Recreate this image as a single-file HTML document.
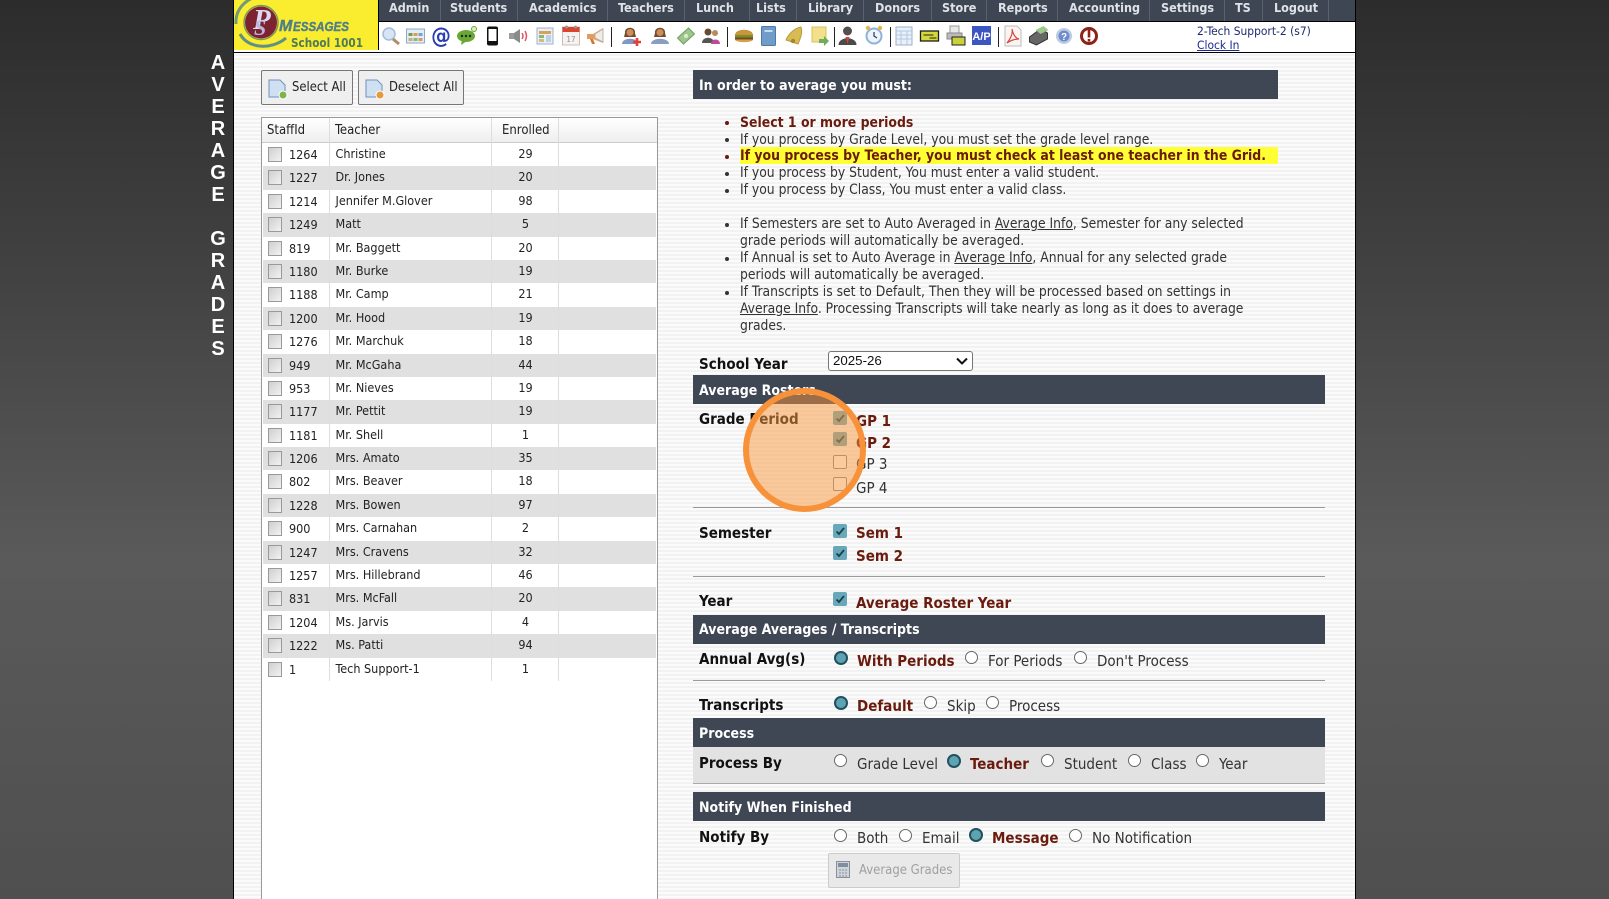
<!DOCTYPE html>
<html><head><meta charset="utf-8"><title>Average Grades</title>
<style>
html,body{margin:0;padding:0;width:1609px;height:899px;overflow:hidden}
body{position:relative;background:linear-gradient(#2c2c2c 0,#444 300px,#5a5a5a 560px,#4f4f4f 899px);font-family:"DejaVu Sans Condensed","DejaVu Sans",sans-serif;font-stretch:condensed;font-size:13px;color:#333}
#wrap{position:absolute;left:0;top:0;width:1609px;height:899px;overflow:hidden}
#page{position:absolute;left:233px;top:0;width:1121px;height:899px;border:solid #000;border-width:0 1px;background:repeating-linear-gradient(#fbfbfb 0 2px,#f2f2f2 2px 4px)}
.a{position:absolute}
.t{position:absolute;white-space:nowrap;line-height:16px}
.b{font-weight:bold}
.m{font-weight:bold;color:#6a1b0e;font-size:15px}
.lb{font-weight:bold;color:#111;font-size:15px}
.g{font-size:15px}
.bar{position:absolute;left:693px;width:632px;height:29px;background:#3f4755}
.bt{position:absolute;left:699px;color:#fff;font-weight:bold;font-size:14px;line-height:16px;white-space:nowrap}
.hr{position:absolute;left:693px;width:632px;height:1px;background:#9a9a9a}
.nav{position:absolute;top:0;color:#dfe3e8;font-weight:bold;font-size:12.5px;line-height:15px;white-space:nowrap}
.ns{position:absolute;top:0;width:1px;height:21px;background:#5a6270}
.ts{position:absolute;width:1px;height:20px;top:27px;background:#222}
.c{position:absolute;left:833px;width:14px;height:14px;border-radius:2px;background:#67a9ba}
.c svg{position:absolute;left:0;top:0}
.cu{position:absolute;left:833px;width:12px;height:12px;border:1px solid #888;border-radius:2px;background:#fff}
.ro,.rs{position:absolute;width:11px;height:11px;border-radius:50%;border:1px solid #666;background:#fff}
.rs{background:#5fa3b2;border:2px solid #1f5160;width:10px;height:10px}
.li{position:absolute;left:740px;white-space:nowrap;line-height:16px;font-size:13.75px;color:#333}
.li.b{font-size:13.88px}
.li u{color:#333}
.bu{position:absolute;left:725px;width:4px;height:4px;border-radius:50%;background:#333}
#tb{position:absolute;left:261px;top:117px;width:395px;height:782px;border:1.5px solid #999;border-bottom:0;background:#fff}
#hd{position:absolute;left:0;top:0;width:100%;height:24px;background:linear-gradient(#fff,#eee);border-bottom:1px solid #ccc}
#hd span{position:absolute;top:5px;line-height:16px;color:#222;font-size:13px;white-space:nowrap}
#rows{position:absolute;left:1px;top:25px;width:393px}
.r{position:relative;height:23.4px;background:#fff}
.r:nth-child(even){background:#e0e0e0}
.r i{position:absolute;left:5px;top:4px;width:12px;height:13px;border:1.5px solid #999;background:linear-gradient(135deg,#cfcfcf,#f2f2f2)}
.r span{position:absolute;font-style:normal;line-height:16px;top:3px;font-size:12.5px;color:#222;white-space:nowrap}
.r .id{left:26px;top:4px}
.r .nm{left:72.5px}
.r .en{left:229px;width:67px;text-align:center}
.vl{position:absolute;top:0;width:1px;height:563px;background:#ddd}
.btn{position:absolute;box-sizing:border-box;border:1px solid #777;border-radius:2px;background:#efefef;color:#222;font-size:12.9px;line-height:16px}
.btn span{position:absolute;white-space:nowrap;top:8.5px}
#ring{position:absolute;left:743px;top:388px;width:111px;height:112px;border:6.5px solid #f7923a;border-radius:50%;background:rgba(248,150,60,.5)}
.side{position:absolute;left:207px;width:22px;text-align:center;color:#fff;font:bold 20px/22px "Liberation Sans",sans-serif}
</style></head><body>
<div id="wrap">
<div class="side" style="top:52px">A</div><div class="side" style="top:74px">V</div><div class="side" style="top:96px">E</div><div class="side" style="top:118px">R</div><div class="side" style="top:140px">A</div><div class="side" style="top:162px">G</div><div class="side" style="top:184px">E</div><div class="side" style="top:228px">G</div><div class="side" style="top:250px">R</div><div class="side" style="top:272px">A</div><div class="side" style="top:294px">D</div><div class="side" style="top:316px">E</div><div class="side" style="top:338px">S</div>

<div id="page"></div>

<!-- top bar -->
<div class="a" style="left:234px;top:0;width:144px;height:50px;background:#faec2e;overflow:hidden">
 <svg width="144" height="50" style="position:absolute;left:0;top:0">
  <path d="M2 24C1 8 14 -5 34 -5" fill="none" stroke="#6f9a7c" stroke-width="3"/>
  <path d="M6 34C14 49 38 50 52 38" fill="none" stroke="#5f8f86" stroke-width="3"/>
  <circle cx="27" cy="22.5" r="17" fill="none" stroke="#7b9a62" stroke-width="1.5"/>
  <circle cx="27" cy="22.5" r="16" fill="#7c2230"/>
  <text x="19" y="29" font-family="Liberation Serif" font-style="italic" font-weight="bold" font-size="29" fill="#dcd8f0">P</text>
  <text x="20" y="35" font-family="Liberation Serif" font-style="italic" font-weight="bold" font-size="22" fill="#b9b6e0">S</text>
  <text x="45" y="31" font-family="Liberation Sans" font-style="italic" font-weight="bold" font-size="16" fill="#4f7f8a" stroke="#4f7f8a" stroke-width=".4">M</text>
  <text x="59" y="31" font-family="Liberation Sans" font-style="italic" font-weight="bold" font-size="12.5" fill="#4f7f8a" stroke="#4f7f8a" stroke-width=".4" textLength="56" lengthAdjust="spacingAndGlyphs">ESSAGES</text>
  <text x="57" y="47" font-family="DejaVu Sans" font-weight="bold" font-size="12" fill="#4f7a5c" textLength="72" lengthAdjust="spacingAndGlyphs">School 1001</text>
 </svg>
</div>
<div class="a" style="left:378px;top:0;width:977px;height:21px;background:#3e4654"></div>
<div class="a" style="left:378px;top:21px;width:977px;height:1px;background:#000"></div>
<div class="a" style="left:378px;top:22px;width:977px;height:30px;background:#fff"></div>
<div class="a" style="left:378px;top:0;width:1px;height:52px;background:#000"></div>
<div class="a" style="left:234px;top:50px;width:1121px;height:2px;background:#fff"></div>
<div class="a" style="left:234px;top:52px;width:1121px;height:1px;background:#000"></div>

<span class="nav" style="left:389px">Admin</span><span class="nav" style="left:450px">Students</span><span class="nav" style="left:529px">Academics</span><span class="nav" style="left:618px">Teachers</span><span class="nav" style="left:696px">Lunch</span><span class="nav" style="left:756px">Lists</span><span class="nav" style="left:808px">Library</span><span class="nav" style="left:875px">Donors</span><span class="nav" style="left:942px">Store</span><span class="nav" style="left:998px">Reports</span><span class="nav" style="left:1069px">Accounting</span><span class="nav" style="left:1161px">Settings</span><span class="nav" style="left:1235px">TS</span><span class="nav" style="left:1274px">Logout</span>
<i class="ns" style="left:440px"></i><i class="ns" style="left:517px"></i><i class="ns" style="left:607px"></i><i class="ns" style="left:684px"></i><i class="ns" style="left:749px"></i><i class="ns" style="left:796px"></i><i class="ns" style="left:863px"></i><i class="ns" style="left:931px"></i><i class="ns" style="left:986px"></i><i class="ns" style="left:1057px"></i><i class="ns" style="left:1149px"></i><i class="ns" style="left:1224px"></i><i class="ns" style="left:1262px"></i><i class="ns" style="left:1328px"></i>
<i class="ts" style="left:611px"></i><i class="ts" style="left:727px"></i><i class="ts" style="left:834px"></i><i class="ts" style="left:890px"></i><i class="ts" style="left:998px"></i>

<svg class="a" style="left:0;top:0" width="1609" height="60">
 <g transform="translate(391,36)"><circle cx="-2" cy="-2" r="6" fill="#d6e4f5" stroke="#a5bcd8" stroke-width="1.5"/><path d="M2 3L8 8" stroke="#b08d62" stroke-width="3"/></g>
 <g transform="translate(415.5,36)"><rect x="-9" y="-7" width="18" height="14" fill="#e4ecf6" stroke="#8ea8c8"/><rect x="-7" y="-3" width="4" height="3" fill="#7a9a5c"/><rect x="-2" y="-3" width="4" height="3" fill="#d9a24a"/><rect x="3" y="-3" width="4" height="3" fill="#7f9fc8"/><rect x="-7" y="2" width="4" height="3" fill="#c9b26a"/><rect x="-2" y="2" width="4" height="3" fill="#8fb27a"/><rect x="3" y="2" width="4" height="3" fill="#d49a6a"/></g>
 <text x="441" y="43" text-anchor="middle" font-family="DejaVu Sans" font-weight="bold" font-size="22" fill="#2a3fb4">@</text>
 <g transform="translate(467,36)"><ellipse cx="-1" cy="0" rx="9" ry="6" fill="#6aa834"/><path d="M-5 4L-6 9L0 5z" fill="#6aa834"/><circle cx="-5" cy="0" r="1.2" fill="#222"/><circle cx="-1" cy="0" r="1.2" fill="#222"/><circle cx="3" cy="0" r="1.2" fill="#222"/><circle cx="7" cy="-7" r="2.5" fill="#dfeccb" stroke="#6aa834"/></g>
 <g transform="translate(492.5,36)"><rect x="-5.5" y="-9.5" width="11" height="19" rx="2" fill="#111"/><rect x="-4" y="-7" width="8" height="12" fill="#fff"/></g>
 <g transform="translate(518,36)"><rect x="-9" y="-3" width="5" height="6" fill="#9a9a9a"/><path d="M-4 -3L2 -7V7L-4 3z" fill="#8a8a8a"/><path d="M4 -3Q6 0 4 3M7 -5Q10 0 7 5" stroke="#e0566a" stroke-width="1.5" fill="none"/></g>
 <g transform="translate(545,36)"><rect x="-8" y="-8" width="16" height="16" fill="#eaeff6" stroke="#9fb2cc"/><rect x="-6" y="-5" width="12" height="3" fill="#d9a15a"/><rect x="-6" y="-1" width="5" height="3" fill="#8fb27a"/><rect x="1" y="-1" width="5" height="7" fill="#bcd0e6"/><rect x="-6" y="3" width="5" height="3" fill="#c9c07a"/></g>
 <g transform="translate(570.5,36)"><rect x="-8" y="-9" width="17" height="18" fill="#f6f3ee" stroke="#c9c0b5"/><rect x="-8" y="-9" width="17" height="5" fill="#d9442f"/><circle cx="-4" cy="-9" r="1.5" fill="#999"/><circle cx="5" cy="-9" r="1.5" fill="#999"/><text x="0.5" y="6" text-anchor="middle" font-family="DejaVu Sans" font-size="8" fill="#8a8fa8">17</text></g>
 <g transform="translate(596,36)"><path d="M-9 -2L-3 -2L7 -8V7L-3 3L-9 3z" fill="#e89a5a"/><path d="M-1 -2L7 -7V6L-1 2z" fill="#f0ede6" stroke="#b9b4a8"/><path d="M-6 3L-4 8H-1L-3 3z" fill="#d07a3a"/></g>
 <g transform="translate(631,36)"><path d="M-6 -3C-7 -10 5 -10 4 -3L5 1H-7z" fill="#7a4a28"/><circle cx="-1" cy="-3.5" r="3.5" fill="#c98f5f"/><path d="M-9 8C-9 1 7 1 7 8z" fill="#7f99c4"/><path d="M2 6h8M6 2v8" stroke="#e2403a" stroke-width="2.6"/></g>
 <g transform="translate(660,36)"><path d="M-5 -3C-6 -10 6 -10 5 -3L6 1H-6z" fill="#7a4a28"/><circle cy="-3.5" r="3.5" fill="#c98f5f"/><path d="M-9 8C-9 1 9 1 9 8z" fill="#8a9ec2"/></g>
 <g transform="translate(685.5,36)"><path d="M-8 2L3 -8L9 -2L-2 8z" fill="#9cc68c" stroke="#6f9f60"/><circle cx="0.5" cy="0" r="2" fill="#dcecd0"/></g>
 <g transform="translate(711,36)"><circle cx="-3" cy="-4" r="3.5" fill="#6a4a32"/><circle cx="4" cy="-3" r="3" fill="#b98a5a"/><path d="M-9 7C-9 0 3 0 3 7z" fill="#555"/><path d="M0 8C0 2 9 2 9 8z" fill="#c04a9a"/></g>
 <g transform="translate(744,36)"><path d="M-9 -1C-9 -8 9 -8 9 -1z" fill="#c9963a"/><rect x="-9" y="-1" width="18" height="2.5" fill="#7a8f2a"/><rect x="-9" y="1.5" width="18" height="2" fill="#7a4a22"/><path d="M-9 3.5H9C9 7 -9 7 -9 3.5z" fill="#d2a24a"/></g>
 <g transform="translate(768.5,36)"><rect x="-7" y="-9.5" width="14" height="19" rx="1" fill="#6f9cc9" stroke="#4f7aa8"/><rect x="-4" y="-6" width="8" height="2" fill="#c8dcef"/></g>
 <g transform="translate(794,36)"><path d="M7 -9C0 -8 -6 -1 -8 4L4 8C6 3 9 -3 7 -9z" fill="#d9bb55" stroke="#b89a3a"/><circle cx="-1" cy="5" r="2.2" fill="#a8842a"/></g>
 <g transform="translate(820,36)"><rect x="-8" y="-9" width="14" height="15" fill="#f3e08a" stroke="#d9c060"/><path d="M-1 3H4V0L9 5L4 10V7H-1z" fill="#6fae54"/></g>
 <g transform="translate(847.5,36)"><circle cy="-5" r="4.5" fill="#55504c"/><path d="M-9 9C-9 0 9 0 9 9z" fill="#4a4a4a"/><path d="M-2 1L0 8L2 1z" fill="#c9443a"/></g>
 <g transform="translate(874,36)"><circle r="7.5" fill="#eef4fb" stroke="#8fb2d8" stroke-width="2"/><path d="M0 -4V0L3 2" stroke="#346" stroke-width="1.3" fill="none"/><circle cx="-6" cy="-8" r="2.2" fill="#e0b84a"/><circle cx="6" cy="-8" r="2.2" fill="#e0b84a"/></g>
 <g transform="translate(904,36)"><rect x="-8" y="-9" width="16" height="18" fill="#e9f0f9" stroke="#98b2d0"/><path d="M-8 -5H8M-8 -1H8M-8 3H8M-3 -5V9M3 -5V9" stroke="#b4c8e0"/></g>
 <g transform="translate(929.5,36)"><rect x="-9" y="-5" width="18" height="10" fill="#d4d83a" stroke="#1c1c1c" stroke-width="1.3"/><path d="M-6 -1H4M0 2H7" stroke="#222"/></g>
 <g transform="translate(955,36)"><rect x="-5" y="-10" width="9" height="7" fill="#e8e8e8" stroke="#999"/><rect x="-8" y="-3" width="15" height="6" fill="#bbb" stroke="#888"/><rect x="-3" y="1" width="13" height="8" fill="#c9d03a" stroke="#222"/></g>
 <rect x="972" y="26" width="19" height="19" fill="#3d55c0"/><text x="981.5" y="40" text-anchor="middle" font-family="Liberation Sans" font-weight="bold" font-size="11" fill="#fff">A/P</text>
 <g transform="translate(1013,36)"><path d="M-8 -10H4L8 -6V10H-8z" fill="#fbf4f2" stroke="#bbb"/><path d="M-6 7C-2 2 0 -3 -1 -7C0 -2 2 2 6 3C2 3 -2 4 -6 7z" fill="none" stroke="#d24a3a" stroke-width="1.2"/></g>
 <g transform="translate(1038.5,36)"><path d="M-9 1L2 -7L9 -3V3L-2 9L-9 6z" fill="#666" stroke="#333"/><path d="M-3 -6L5 -10L10 -6L2 -2z" fill="#9cc88c"/></g>
 <circle cx="1064" cy="36" r="8" fill="#bccbe6"/><circle cx="1064" cy="36" r="5.5" fill="#6f8cc8"/><text x="1064" y="40" text-anchor="middle" font-family="Liberation Sans" font-weight="bold" font-size="10" fill="#fff">?</text>
 <circle cx="1089" cy="36" r="7.5" fill="#fff" stroke="#8c2218" stroke-width="3"/><rect x="1087.7" y="30" width="2.6" height="7.5" fill="#8c2218"/><rect x="1087.7" y="39" width="2.6" height="2.6" fill="#8c2218"/>
</svg>

<span class="t" style="left:1197px;top:23px;font-size:11.9px;color:#1d2a6e">2-Tech Support-2 (s7)</span>
<span class="t" style="left:1197px;top:37px;font-size:11.9px;color:#1d2a8e;text-decoration:underline">Clock In</span>

<!-- buttons -->
<div class="btn" style="left:261px;top:70px;width:92px;height:35px"><svg class="a" style="left:5px;top:7px" width="22" height="22"><path d="M2 2H13L18 7V19H2z" fill="#cfe0f3" stroke="#6d92c0"/><circle cx="16" cy="17" r="4" fill="#7eb44a" stroke="#fff"/></svg><span style="left:30px">Select All</span></div>
<div class="btn" style="left:358px;top:70px;width:106px;height:35px"><svg class="a" style="left:5px;top:7px" width="22" height="22"><path d="M2 2H13L18 7V19H2z" fill="#cfe0f3" stroke="#6d92c0"/><circle cx="16" cy="17" r="4" fill="#e89a3a" stroke="#fff"/></svg><span style="left:30px">Deselect All</span></div>

<!-- grid -->
<div id="tb">
 <div id="hd"><span style="left:5px">StaffId</span><span style="left:73px">Teacher</span><span style="left:240px">Enrolled</span></div>
 <div id="rows">
  <div class="r"><i></i><span class="id">1264</span><span class="nm">Christine</span><span class="en">29</span></div>
  <div class="r"><i></i><span class="id">1227</span><span class="nm">Dr. Jones</span><span class="en">20</span></div>
  <div class="r"><i></i><span class="id">1214</span><span class="nm">Jennifer M.Glover</span><span class="en">98</span></div>
  <div class="r"><i></i><span class="id">1249</span><span class="nm">Matt</span><span class="en">5</span></div>
  <div class="r"><i></i><span class="id">819</span><span class="nm">Mr. Baggett</span><span class="en">20</span></div>
  <div class="r"><i></i><span class="id">1180</span><span class="nm">Mr. Burke</span><span class="en">19</span></div>
  <div class="r"><i></i><span class="id">1188</span><span class="nm">Mr. Camp</span><span class="en">21</span></div>
  <div class="r"><i></i><span class="id">1200</span><span class="nm">Mr. Hood</span><span class="en">19</span></div>
  <div class="r"><i></i><span class="id">1276</span><span class="nm">Mr. Marchuk</span><span class="en">18</span></div>
  <div class="r"><i></i><span class="id">949</span><span class="nm">Mr. McGaha</span><span class="en">44</span></div>
  <div class="r"><i></i><span class="id">953</span><span class="nm">Mr. Nieves</span><span class="en">19</span></div>
  <div class="r"><i></i><span class="id">1177</span><span class="nm">Mr. Pettit</span><span class="en">19</span></div>
  <div class="r"><i></i><span class="id">1181</span><span class="nm">Mr. Shell</span><span class="en">1</span></div>
  <div class="r"><i></i><span class="id">1206</span><span class="nm">Mrs. Amato</span><span class="en">35</span></div>
  <div class="r"><i></i><span class="id">802</span><span class="nm">Mrs. Beaver</span><span class="en">18</span></div>
  <div class="r"><i></i><span class="id">1228</span><span class="nm">Mrs. Bowen</span><span class="en">97</span></div>
  <div class="r"><i></i><span class="id">900</span><span class="nm">Mrs. Carnahan</span><span class="en">2</span></div>
  <div class="r"><i></i><span class="id">1247</span><span class="nm">Mrs. Cravens</span><span class="en">32</span></div>
  <div class="r"><i></i><span class="id">1257</span><span class="nm">Mrs. Hillebrand</span><span class="en">46</span></div>
  <div class="r"><i></i><span class="id">831</span><span class="nm">Mrs. McFall</span><span class="en">20</span></div>
  <div class="r"><i></i><span class="id">1204</span><span class="nm">Ms. Jarvis</span><span class="en">4</span></div>
  <div class="r"><i></i><span class="id">1222</span><span class="nm">Ms. Patti</span><span class="en">94</span></div>
  <div class="r"><i></i><span class="id">1</span><span class="nm">Tech Support-1</span><span class="en">1</span></div>
 </div>
 <i class="vl" style="left:66.5px"></i><i class="vl" style="left:229px"></i><i class="vl" style="left:296px"></i>
</div>

<!-- instructions -->
<div class="a" style="left:693px;top:70px;width:585px;height:29px;background:#3f4755"></div>
<span class="bt" style="top:78px">In order to average you must:</span>

<div class="a" style="left:740px;top:147px;width:538px;height:17px;background:#ffff33"></div>
<i class="bu" style="top:121px;background:#6a1b0e"></i><span class="li b" style="top:115px;color:#6a1b0e">Select 1 or more periods</span>
<i class="bu" style="top:138px"></i><span class="li" style="top:132px">If you process by Grade Level, you must set the grade level range.</span>
<i class="bu" style="top:155px;background:#6a1b0e"></i><span class="li b" style="top:148px;color:#6a1b0e">If you process by Teacher, you must check at least one teacher in the Grid.</span>
<i class="bu" style="top:172px"></i><span class="li" style="top:165px">If you process by Student, You must enter a valid student.</span>
<i class="bu" style="top:189px"></i><span class="li" style="top:182px">If you process by Class, You must enter a valid class.</span>
<i class="bu" style="top:223px"></i><span class="li" style="top:216px">If Semesters are set to Auto Averaged in <u>Average Info</u>, Semester for any selected</span>
<span class="li" style="top:233px">grade periods will automatically be averaged.</span>
<i class="bu" style="top:257px"></i><span class="li" style="top:250px">If Annual is set to Auto Average in <u>Average Info</u>, Annual for any selected grade</span>
<span class="li" style="top:267px">periods will automatically be averaged.</span>
<i class="bu" style="top:291px"></i><span class="li" style="top:284px">If Transcripts is set to Default, Then they will be processed based on settings in</span>
<span class="li" style="top:301px"><u>Average Info</u>. Processing Transcripts will take nearly as long as it does to average</span>
<span class="li" style="top:318px">grades.</span>

<!-- school year -->
<span class="t lb" style="left:699px;top:356px">School Year</span>
<div class="a" style="left:828px;top:351px;width:143px;height:18px;border:1px solid #767676;border-radius:3px;background:#fff"><span class="t" style="left:4px;top:1px;font:13.3px/16px 'Liberation Sans',sans-serif;color:#111">2025-26</span><svg class="a" style="left:126px;top:5px" width="14" height="9"><path d="M2 1.5L7 6.5L12 1.5" fill="none" stroke="#111" stroke-width="2"/></svg></div>

<div class="bar" style="top:375px"></div><span class="bt" style="top:383px">Average Rosters</span>
<span class="t lb" style="left:699px;top:411px">Grade Period</span>
<div class="c" style="top:411px"><svg width="14" height="14"><path d="M3.5 7.5L6 10L11 4" fill="none" stroke="#1d3f4a" stroke-width="1.8"/></svg></div><span class="t m" style="left:856px;top:413px">GP 1</span>
<div class="c" style="top:432px"><svg width="14" height="14"><path d="M3.5 7.5L6 10L11 4" fill="none" stroke="#1d3f4a" stroke-width="1.8"/></svg></div><span class="t m" style="left:856px;top:435px">GP 2</span>
<div class="cu" style="top:455px"></div><span class="t g" style="left:856px;top:456px">GP 3</span>
<div class="cu" style="top:477px"></div><span class="t g" style="left:856px;top:480px">GP 4</span>
<div class="hr" style="top:507px"></div>
<span class="t lb" style="left:699px;top:525px">Semester</span>
<div class="c" style="top:524px"><svg width="14" height="14"><path d="M3.5 7.5L6 10L11 4" fill="none" stroke="#1d3f4a" stroke-width="1.8"/></svg></div><span class="t m" style="left:856px;top:525px">Sem 1</span>
<div class="c" style="top:546px"><svg width="14" height="14"><path d="M3.5 7.5L6 10L11 4" fill="none" stroke="#1d3f4a" stroke-width="1.8"/></svg></div><span class="t m" style="left:856px;top:548px">Sem 2</span>
<div class="hr" style="top:576px"></div>
<span class="t lb" style="left:699px;top:593px">Year</span>
<div class="c" style="top:592px"><svg width="14" height="14"><path d="M3.5 7.5L6 10L11 4" fill="none" stroke="#1d3f4a" stroke-width="1.8"/></svg></div><span class="t m" style="left:856px;top:595px">Average Roster Year</span>

<div class="bar" style="top:615px"></div><span class="bt" style="top:622px">Average Averages / Transcripts</span>
<span class="t lb" style="left:699px;top:651px">Annual Avg(s)</span>
<i class="rs" style="left:834px;top:651px"></i><span class="t m" style="left:857px;top:653px">With Periods</span>
<i class="ro" style="left:965px;top:651px"></i><span class="t g" style="left:988px;top:653px">For Periods</span>
<i class="ro" style="left:1074px;top:651px"></i><span class="t g" style="left:1097px;top:653px">Don't Process</span>
<div class="hr" style="top:680px"></div>
<span class="t lb" style="left:699px;top:697px">Transcripts</span>
<i class="rs" style="left:834px;top:696px"></i><span class="t m" style="left:857px;top:698px">Default</span>
<i class="ro" style="left:924px;top:696px"></i><span class="t g" style="left:947px;top:698px">Skip</span>
<i class="ro" style="left:986px;top:696px"></i><span class="t g" style="left:1009px;top:698px">Process</span>

<div class="bar" style="top:718px"></div><span class="bt" style="top:726px">Process</span>
<div class="a" style="left:693px;top:747px;width:632px;height:36px;background:#e2e2e2"></div><div class="a" style="left:693px;top:783px;width:632px;height:1px;background:#aaa"></div>
<span class="t lb" style="left:699px;top:755px">Process By</span>
<i class="ro" style="left:834px;top:754px"></i><span class="t g" style="left:857px;top:756px">Grade Level</span>
<i class="rs" style="left:947px;top:754px"></i><span class="t m" style="left:970px;top:756px">Teacher</span>
<i class="ro" style="left:1041px;top:754px"></i><span class="t g" style="left:1064px;top:756px">Student</span>
<i class="ro" style="left:1128px;top:754px"></i><span class="t g" style="left:1151px;top:756px">Class</span>
<i class="ro" style="left:1196px;top:754px"></i><span class="t g" style="left:1219px;top:756px">Year</span>

<div class="bar" style="top:792px"></div><span class="bt" style="top:800px">Notify When Finished</span>
<span class="t lb" style="left:699px;top:829px">Notify By</span>
<i class="ro" style="left:834px;top:829px"></i><span class="t g" style="left:857px;top:830px">Both</span>
<i class="ro" style="left:899px;top:829px"></i><span class="t g" style="left:922px;top:830px">Email</span>
<i class="rs" style="left:969px;top:828px"></i><span class="t m" style="left:992px;top:830px">Message</span>
<i class="ro" style="left:1069px;top:829px"></i><span class="t g" style="left:1092px;top:830px">No Notification</span>

<div class="a" style="left:828px;top:853px;width:130px;height:33px;border:1px solid #ccc;border-radius:2px;background:#e9e9e9"><svg class="a" style="left:7px;top:7px" width="14" height="17"><rect x=".5" y=".5" width="13" height="16" fill="#cfd4da" stroke="#8a9098"/><rect x="2" y="2" width="10" height="4" fill="#7f8f9f"/><path d="M3 9h8M3 12h8M3 15h8" stroke="#8a9098" stroke-dasharray="2 1"/></svg><span class="t" style="left:30px;top:9px;color:#a0a0a0;font-size:13px">Average Grades</span></div>

<div id="ring"></div>
</div>
</body></html>
